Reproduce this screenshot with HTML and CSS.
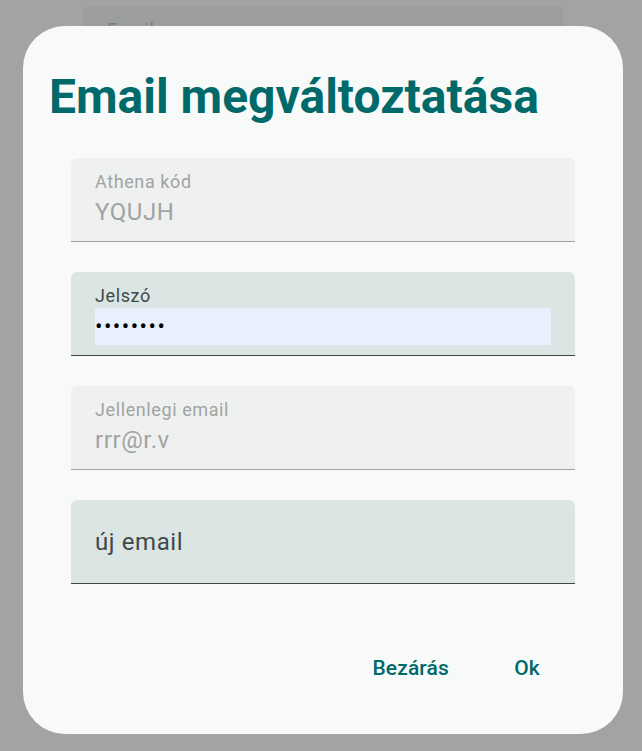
FILE: index.html
```html
<!DOCTYPE html>
<html lang="hu">
<head>
<meta charset="utf-8">
<title>Email megváltoztatása</title>
<link rel="stylesheet" href="styles.css">
</head>
<body>
<div class="page">
  <div class="bg-field">
    <span class="bg-label">Email</span>
  </div>
</div>
<div class="dialog">
  <h1 class="title">Email megváltoztatása</h1>
  <div class="fields">
    <div class="field field-disabled">
      <div class="label">Athena kód</div>
      <div class="value">YQUJH</div>
    </div>
    <div class="field field-active">
      <div class="label label-active">Jelszó</div>
      <div class="value autofill"><span class="dots">••••••••</span></div>
    </div>
    <div class="field field-disabled">
      <div class="label">Jellenlegi email</div>
      <div class="value">rrr@r.v</div>
    </div>
    <div class="field field-active field-empty">
      <div class="hint">új email</div>
    </div>
  </div>
  <div class="actions">
    <button class="btn">Bezárás</button>
    <button class="btn">Ok</button>
  </div>
</div>
</body>
</html>
```

FILE: styles.css
```css
html, body {
  margin: 0;
  padding: 0;
}
body {
  width: 642px;
  height: 751px;
  background: #a2a3a2;
  font-family: Roboto, "Noto Sans", sans-serif;
  overflow: hidden;
  position: relative;
}
.page {
  padding: 6px 79px 0 83px;
}
.bg-field {
  height: 84px;
  background: #9c9e9d;
  border-radius: 6px 6px 0 0;
  padding: 12px 24px 0;
  box-sizing: border-box;
}
.bg-label {
  font-size: 18px;
  line-height: 24px;
  letter-spacing: 0.6px;
  color: #7c7e7d;
}
.dialog {
  position: absolute;
  left: 23px;
  top: 26px;
  width: 600px;
  height: 708px;
  box-sizing: border-box;
  background: #f7faf9;
  border-radius: 42px;
  padding: 41px 48px 36px 48px;
  display: flex;
  flex-direction: column;
}
.title {
  margin: 0 0 31px -22px;
  font-size: 48px;
  line-height: 60px;
  font-weight: 700;
  color: #00696a;
  letter-spacing: 0;
  white-space: nowrap;
}
.fields {
  display: flex;
  flex-direction: column;
  gap: 30px;
}
.field {
  height: 84px;
  box-sizing: border-box;
  border-radius: 6px 6px 0 0;
  padding: 12px 24px 0;
  border-bottom: 1px solid #a0a2a1;
}
.field-disabled {
  background: #eff1f0;
  color: #a1a3a2;
}
.field-active {
  background: #dbe5e3;
  border-bottom-color: #3f4948;
  color: #404948;
}
.label {
  font-size: 18px;
  line-height: 24px;
  letter-spacing: 0.6px;
}
.value {
  font-size: 24px;
  line-height: 36px;
  letter-spacing: 0.6px;
}
.autofill {
  background: #e8f0fe;
  color: #000;
}
.dots {
  font-size: 22px;
  letter-spacing: 1.5px;
}
.field-empty {
  padding: 0 24px;
  display: flex;
  align-items: center;
}
.hint {
  font-size: 24px;
  line-height: 36px;
  letter-spacing: 0.6px;
  color: #3f4948;
}
.actions {
  margin-top: auto;
  display: flex;
  justify-content: flex-end;
  gap: 12px;
}
.btn {
  height: 60px;
  min-width: 96px;
  padding: 0 18px;
  border: none;
  background: transparent;
  font-family: Roboto, "Noto Sans", sans-serif;
  font-size: 21px;
  font-weight: 500;
  letter-spacing: 0.15px;
  color: #00696a;
  cursor: pointer;
}
```
